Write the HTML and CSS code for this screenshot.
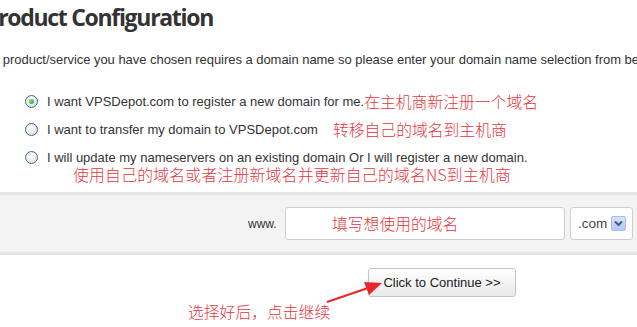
FILE: index.html
```html
<!DOCTYPE html>
<html>
<head>
<meta charset="utf-8">
<link rel="stylesheet" href="styles.css">
</head>
<body>
<div class="page">
  <h1 class="title">Product Configuration</h1>
  <p class="intro">The product/service you have chosen requires a domain name so please enter your domain name selection from below.</p>

  <ul class="options">
    <li class="option"><input type="radio" name="domain" class="radio" checked><span>I want VPSDepot.com to register a new domain for me.</span><span class="note">在主机商新注册一个域名</span></li>
    <li class="option"><input type="radio" name="domain" class="radio"><span>I want to transfer my domain to VPSDepot.com</span><span class="note note-gap">转移自己的域名到主机商</span></li>
    <li class="option"><input type="radio" name="domain" class="radio"><span>I will update my nameservers on an existing domain Or I will register a new domain.</span></li>
  </ul>
  <div class="note note-line">使用自己的域名或者注册新域名并更新自己的域名NS到主机商</div>

  <div class="band">
    <span class="www">www.</span>
    <div class="field"><span class="note">填写想使用的域名</span></div>
    <div class="select"><span>.com</span><span class="select-btn"><svg width="9" height="7" viewBox="0 0 9 7"><path d="M1 1.5 L4.5 5 L8 1.5" fill="none" stroke="#4a5a7a" stroke-width="2"/></svg></span></div>
  </div>

  <div class="actions">
    <button class="btn" type="button">Click to Continue &gt;&gt;</button>
  </div>
  <div class="note note-bottom">选择好后，点击继续</div>

  <svg class="arrow" width="637" height="327" viewBox="0 0 637 327">
    <line x1="327" y1="302" x2="368" y2="288" stroke="#e8262b" stroke-width="2"/>
    <polygon points="382,283 364,282 369,295" fill="#e8262b"/>
  </svg>
</div>
</body>
</html>
```

FILE: styles.css
```css
html, body {
  margin: 0;
  padding: 0;
  background: #fff;
}
.page {
  position: relative;
  width: 637px;
  height: 327px;
  overflow: hidden;
  font-family: "Liberation Sans", Arial, sans-serif;
  color: #333;
}
.title {
  margin: 0 0 0 -15px;
  padding-top: 2px;
  font-family: "Open Sans", sans-serif;
  font-weight: 700;
  font-size: 23px;
  letter-spacing: -1.3px;
  line-height: 30px;
  color: #333;
  white-space: nowrap;
}
.intro {
  margin: 20px 0 0 -23px;
  font-size: 13px;
  line-height: 16px;
  letter-spacing: -0.04px;
  white-space: nowrap;
}
.options {
  list-style: none;
  margin: 19px 0 0 0;
  padding: 0 0 0 25px;
}
.option {
  display: flex;
  align-items: center;
  height: 28px;
  font-size: 13px;
  white-space: nowrap;
}
.radio {
  appearance: none;
  -webkit-appearance: none;
  width: 13px;
  height: 13px;
  margin: 0 9px 0 0;
  border-radius: 50%;
  border: 1px solid #3a6a9a;
  background: radial-gradient(circle at 40% 35%, #ffffff 0%, #e8e8e4 60%, #d6d6d0 100%);
  box-sizing: border-box;
  flex: none;
  position: relative;
}
.radio:checked::after {
  content: "";
  position: absolute;
  left: 3px;
  top: 3px;
  width: 5px;
  height: 5px;
  border-radius: 50%;
  background: radial-gradient(circle at 40% 40%, #7ee07e, #21a121);
}
.note {
  font-family: "Noto Sans CJK SC", sans-serif;
  font-weight: 300;
  font-size: 15.8px;
  color: #e6353b;
  white-space: nowrap;
}
.note-gap {
  margin-left: 15px;
}
.note-line {
  margin: -7px 0 0 73px;
  line-height: 22px;
  letter-spacing: 0.25px;
}
.band {
  display: flex;
  align-items: center;
  margin-top: 6px;
  height: 57px;
  border-top: 3px solid #e6e6e6;
  border-bottom: 3px solid #e6e6e6;
  background: #f3f3f3;
  padding-left: 248px;
}
.www {
  font-size: 12px;
  color: #333;
  width: 37px;
}
.field {
  width: 280px;
  height: 33px;
  background: #fff;
  border: 1px solid #cfcfcf;
  border-radius: 3px;
  display: flex;
  align-items: center;
  padding-left: 46px;
  box-sizing: border-box;
}
.select {
  margin-left: 5px;
  width: 63px;
  height: 33px;
  background: #fff;
  border: 1px solid #cfcfcf;
  border-radius: 3px;
  box-sizing: border-box;
  display: flex;
  align-items: center;
  padding-left: 7px;
  font-size: 13.5px;
  color: #444;
}
.select-btn {
  margin-left: 4px;
  width: 15px;
  height: 15px;
  border-radius: 2px;
  background: linear-gradient(#d6e2fb, #b3c9f3);
  border: 1px solid #a9bde6;
  box-sizing: border-box;
  display: flex;
  align-items: center;
  justify-content: center;
}
.actions {
  margin-top: 13px;
  padding-left: 368px;
}
.btn {
  width: 148px;
  height: 29px;
  font-family: "Liberation Sans", Arial, sans-serif;
  font-size: 13px;
  color: #222;
  border: 1px solid #c4c4c4;
  border-radius: 3px;
  background: linear-gradient(#ffffff, #e9e9e9);
  padding: 0;
}
.note-bottom {
  margin: 3px 0 0 188px;
  line-height: 24px;
}
.arrow {
  position: absolute;
  left: 0;
  top: 0;
  pointer-events: none;
}
```
